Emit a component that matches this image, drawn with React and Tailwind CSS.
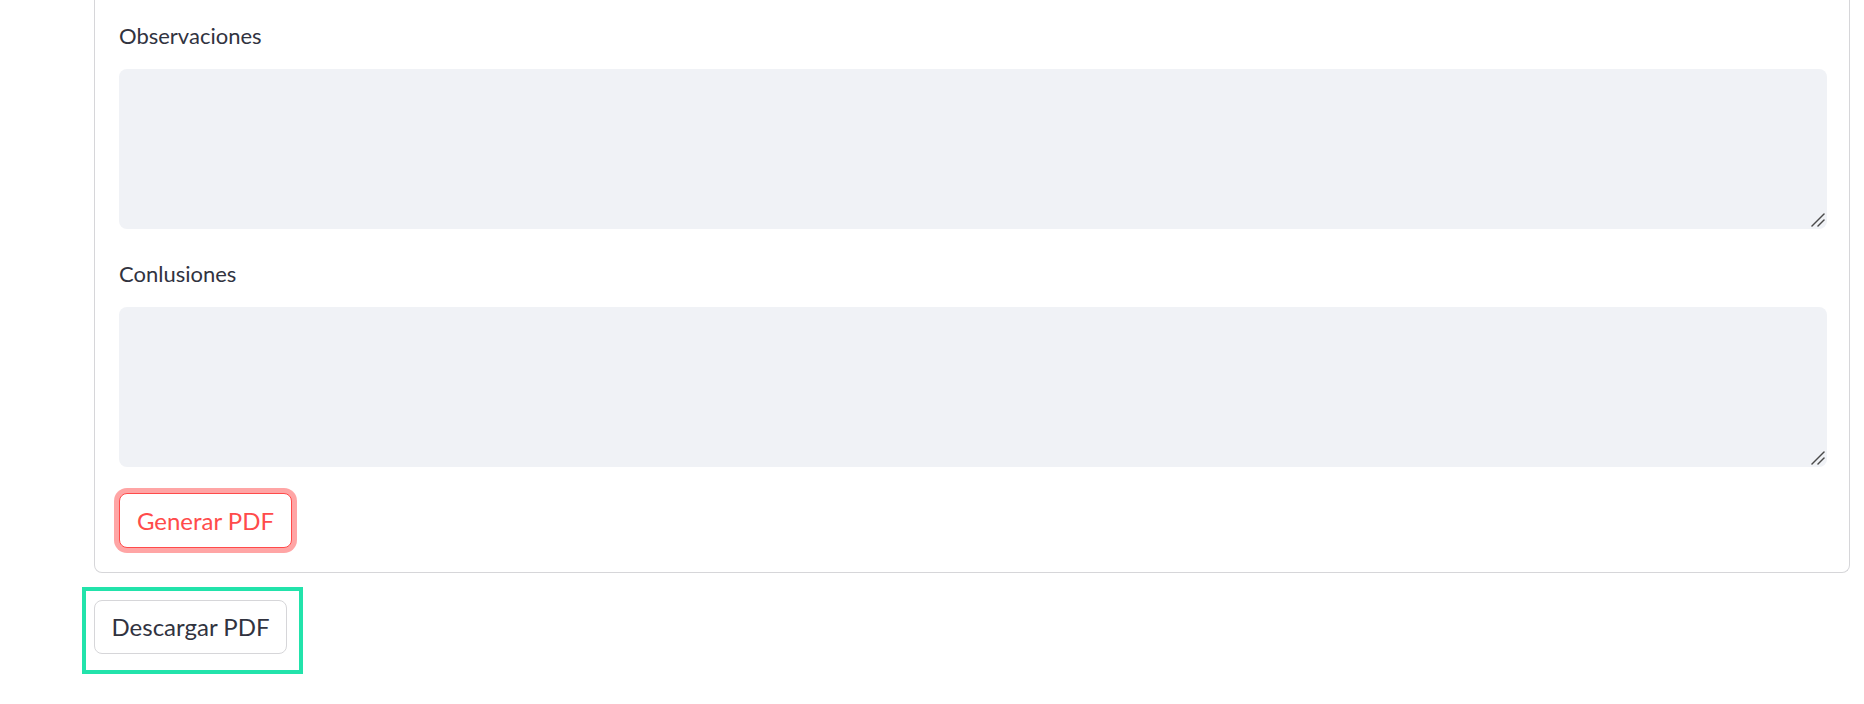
import { useState } from 'react';

const Field = ({ label, value, onChange, className = '' }) => (
  <div className={className}>
    <label className="block text-[22px] leading-[33px] text-[#31333f] mb-[17px]">
      {label}
    </label>
    <div className="relative">
      <textarea
        value={value}
        onChange={(e) => onChange(e.target.value)}
        className="block w-full h-[160px] resize-none rounded-lg border-0 bg-[#f0f2f6] px-4 py-3 text-[22px] text-[#31333f] outline-none"
      />
      {/* resize grip */}
      <svg
        className="pointer-events-none absolute bottom-[2px] right-[2px] h-[14px] w-[14px]"
        viewBox="0 0 14 14"
        fill="none"
        stroke="#4a4a4a"
        strokeWidth="1.5"
        strokeLinecap="round"
      >
        <path d="M1 13L13 1" />
        <path d="M7 13L13 7" />
      </svg>
    </div>
  </div>
);

const App = () => {
  const [observaciones, setObservaciones] = useState('');
  const [conclusiones, setConclusiones] = useState('');

  return (
    <div className="min-h-screen bg-white pl-[94px] pr-[14px] font-['Lato','Liberation_Sans',sans-serif]">
      <div className="rounded-b-lg border-x border-b border-[#d6d6d9] pl-6 pr-[22px] pt-[19px] pb-6">
        <Field label="Observaciones" value={observaciones} onChange={setObservaciones} />
        <Field
          label="Conlusiones"
          value={conclusiones}
          onChange={setConclusiones}
          className="mt-[28px]"
        />
        <button className="mt-[26px] flex h-[55px] w-[173px] items-center justify-center rounded-lg border border-[#ff4b4b] bg-white text-[24px] text-[#ff4b4b] shadow-[0_0_0_5px_rgba(255,75,75,0.5)]">
          Generar PDF
        </button>
      </div>

      <div className="mt-[14px] -ml-3 inline-block border-4 border-[#22e3ab] pl-2 pr-3 pt-[9px] pb-4">
        <button className="flex h-[54px] w-[193px] items-center justify-center rounded-lg border border-[#d6d6d9] bg-white text-[24px] text-[#31333f]">
          Descargar PDF
        </button>
      </div>
    </div>
  );
};

export default App;
